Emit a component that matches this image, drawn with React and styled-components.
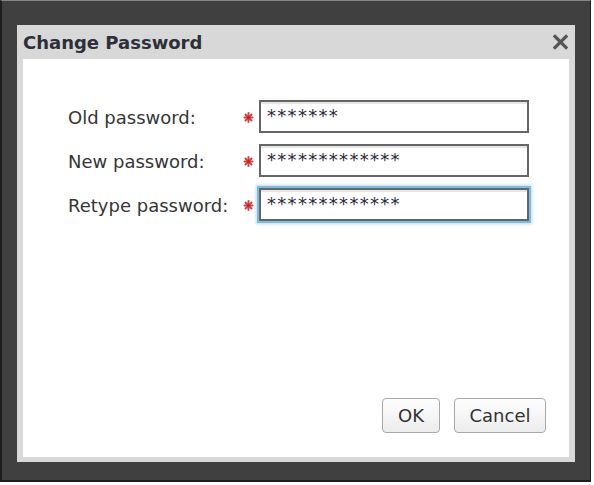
import React from "react";
import styled, { createGlobalStyle } from "styled-components";

const GlobalStyle = createGlobalStyle`
  html, body { margin: 0; padding: 0; background: #ffffff; }
  body { font-family: "DejaVu Sans", Verdana, sans-serif; }
`;

const Frame = styled.div`
  box-sizing: border-box;
  width: 591px;
  height: 482px;
  background: #404040;
  border-top: 1px solid #8a8580;
  border-left: 2px solid #1f1c1a;
  border-right: 1px solid #1f1c1a;
  border-bottom: 2px solid #1f1c1a;
  padding: 24px 0 0 15px;
`;

const Dialog = styled.div`
  box-sizing: border-box;
  width: 558px;
  height: 437px;
  background: #d8d8d8;
  display: flex;
  flex-direction: column;
  padding: 0 6px 5px 6px;
`;

const TitleBar = styled.div`
  height: 34px;
  display: flex;
  align-items: center;
  justify-content: space-between;
  padding: 0 1px 0 0;
`;

const Title = styled.span`
  font-family: "DejaVu Sans", Verdana, sans-serif;
  font-weight: bold;
  font-size: 18px;
  color: #2d2f3a;
  margin-top: 1px;
`;

const CloseButton = styled.button`
  border: 0;
  background: transparent;
  padding: 0;
  width: 15px;
  height: 16px;
  display: flex;
  cursor: pointer;
`;

const Body = styled.div`
  flex: 1;
  background: #ffffff;
  display: flex;
  flex-direction: column;
  padding: 41px 23px 24px 45px;
`;

const Form = styled.div`
  display: grid;
  grid-template-columns: 175px 16px 270px;
  row-gap: 11px;
  align-items: center;
`;

const Label = styled.label`
  font-size: 18px;
  color: #363636;
  padding-top: 1px;
`;

const Required = styled.span`
  display: flex;
  align-items: center;
  width: 11px;
  height: 13px;
  margin-top: 1px;
`;

const Input = styled.input`
  box-sizing: border-box;
  width: 270px;
  height: 33px;
  border: 2px solid #666666;
  border-radius: 0;
  box-shadow: inset 0 2px 0 #e6e6e6${(p) => (p.$focused ? ", 0 0 0 2px #7dbde3, 0 0 3px 3px #b5daf0" : "")};
  padding: 0 6px 2px 6px;
  font-family: "DejaVu Sans", Verdana, sans-serif;
  font-size: 18px;
  letter-spacing: 1.3px;
  color: #2a2a3a;
  background: #ffffff;
  outline: none;
`;

const Actions = styled.div`
  margin-top: auto;
  display: flex;
  justify-content: flex-end;
  gap: 14px;
`;

const Button = styled.button`
  box-sizing: border-box;
  width: ${(p) => p.$w}px;
  height: 35px;
  border: 1px solid #a9a9a9;
  border-radius: 4px;
  background: linear-gradient(#ffffff, #ececec);
  font-family: "DejaVu Sans", Verdana, sans-serif;
  font-size: 18px;
  color: #333333;
  padding: 0;
  cursor: pointer;
`;

const Asterisk = () => (
  <svg width="11" height="13" viewBox="0 0 11 13">
    <g stroke="#d24545" strokeWidth="2" strokeLinecap="round">
      <line x1="5.5" y1="2" x2="5.5" y2="11" />
      <line x1="1.5" y1="6.5" x2="9.5" y2="6.5" />
      <line x1="2.5" y1="3.5" x2="8.5" y2="9.5" />
      <line x1="8.5" y1="3.5" x2="2.5" y2="9.5" />
    </g>
    <circle cx="5.5" cy="6.5" r="1.6" fill="#b02828" />
  </svg>
);

const CloseIcon = () => (
  <svg width="15" height="16" viewBox="0 0 15 16">
    <g stroke="#555555" strokeWidth="3.2" strokeLinecap="square">
      <line x1="2" y1="2.5" x2="13" y2="13.5" />
      <line x1="13" y1="2.5" x2="2" y2="13.5" />
    </g>
  </svg>
);

const fields = [
  { label: "Old password:", value: "*******" },
  { label: "New password:", value: "*************" },
  { label: "Retype password:", value: "*************", focused: true },
];

export default function App() {
  return (
    <>
      <GlobalStyle />
      <Frame>
        <Dialog>
          <TitleBar>
            <Title>Change Password</Title>
            <CloseButton aria-label="Close">
              <CloseIcon />
            </CloseButton>
          </TitleBar>
          <Body>
            <Form>
              {fields.map((f) => (
                <React.Fragment key={f.label}>
                  <Label>{f.label}</Label>
                  <Required>
                    <Asterisk />
                  </Required>
                  <Input type="text" readOnly value={f.value} $focused={f.focused} />
                </React.Fragment>
              ))}
            </Form>
            <Actions>
              <Button $w={58}>OK</Button>
              <Button $w={92}>Cancel</Button>
            </Actions>
          </Body>
        </Dialog>
      </Frame>
    </>
  );
}
